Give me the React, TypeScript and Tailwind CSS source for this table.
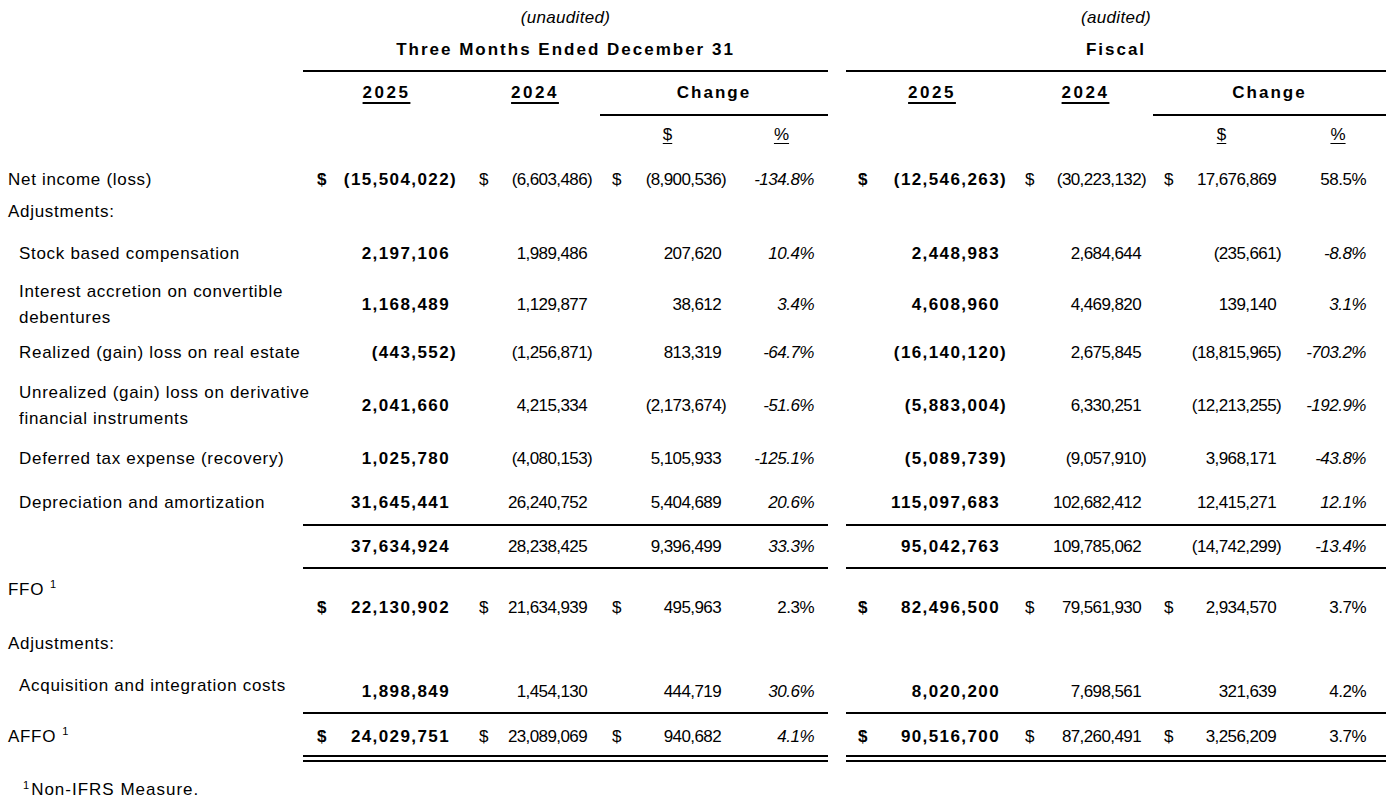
import React from "react";
import { clsx } from "clsx";

/** 11 tracks: label | Q3 2025, 2024, chg $, chg % | gap | FY 2025, 2024, chg $, chg % | edge */
const GRID =
  "grid grid-cols-[303px_167px_130px_135px_93px_18px_172px_135px_137px_96px_6px]";

type Col = { pad: string; slot: string };

const COLS: Col[] = [
  { pad: "pl-[14px] pr-[11px]", slot: "w-[9px]" },
  { pad: "pl-[9px] pr-[4px]", slot: "w-[9px]" },
  { pad: "pl-[12px] pr-[6px]", slot: "w-[8px]" },
  { pad: "pr-[14px]", slot: "" },
  { pad: "pl-[12px] pr-[9px]", slot: "w-[9px]" },
  { pad: "pl-[7px] pr-[4px]", slot: "w-[8px]" },
  { pad: "pl-[11px] pr-[7px]", slot: "w-[7px]" },
  { pad: "pr-[20px]", slot: "" },
];

type Line = "none" | "single" | "double";

type Side = {
  /** 2025, 2024, change $ */
  amounts: [string, string, string];
  pct: string;
  italic: boolean;
};

type DataRow = {
  label: React.ReactNode;
  indent?: boolean;
  dollar?: boolean;
  height: string;
  /** padding/alignment for label cell */
  labelBox: string;
  /** padding/alignment for number cells */
  valueBox: string;
  line?: Line;
  q3: Side;
  fy: Side;
};

function lineCls(line: Line) {
  if (line === "single") return "border-b-2 border-black";
  if (line === "double") return "border-b-[7px] border-double border-black";
  return "";
}

function Amount({
  v,
  col,
  bold,
  dollar,
  box,
  line,
}: {
  v: string;
  col: Col;
  bold: boolean;
  dollar: boolean;
  box: string;
  line: Line;
}) {
  const neg = v.endsWith(")");
  const body = neg ? v.slice(0, -1) : v;
  return (
    <div className={clsx("flex justify-between", col.pad, box, lineCls(line))}>
      <span className={clsx(bold && "font-bold")}>{dollar ? "$" : ""}</span>
      <span className="flex">
        <span
          className={clsx(
            "whitespace-nowrap",
            bold ? "font-bold tracking-[1.4px]" : "tracking-[-0.6px]",
          )}
        >
          {body}
        </span>
        <span className={clsx(col.slot, bold && "font-bold")}>
          {neg ? ")" : ""}
        </span>
      </span>
    </div>
  );
}

function Pct({
  v,
  italic,
  col,
  box,
  line,
}: {
  v: string;
  italic: boolean;
  col: Col;
  box: string;
  line: Line;
}) {
  return (
    <div className={clsx("flex justify-end", col.pad, box, lineCls(line))}>
      <span className={clsx("tracking-[-0.5px]", italic && "italic")}>{v}</span>
    </div>
  );
}

function SideCells({
  side,
  offset,
  row,
}: {
  side: Side;
  offset: number;
  row: DataRow;
}) {
  const line = row.line ?? "none";
  return (
    <>
      {side.amounts.map((a, i) => (
        <Amount
          key={i}
          v={a}
          col={COLS[offset + i]}
          bold={i === 0}
          dollar={!!row.dollar}
          box={row.valueBox}
          line={line}
        />
      ))}
      <Pct
        v={side.pct}
        italic={side.italic}
        col={COLS[offset + 3]}
        box={row.valueBox}
        line={line}
      />
    </>
  );
}

function Sup() {
  return <span className="relative -top-[7px] ml-[6px] text-[11px]">1</span>;
}

const ROWS: DataRow[] = [
  {
    label: "Net income (loss)",
    dollar: true,
    height: "h-[42px]",
    labelBox: "pt-[16px]",
    valueBox: "pt-[16px]",
    q3: { amounts: ["(15,504,022)", "(6,603,486)", "(8,900,536)"], pct: "-134.8%", italic: true },
    fy: { amounts: ["(12,546,263)", "(30,223,132)", "17,676,869"], pct: "58.5%", italic: false },
  },
  {
    label: "Adjustments:",
    height: "h-[36px]",
    labelBox: "pt-[6px]",
    valueBox: "",
    q3: { amounts: ["", "", ""], pct: "", italic: false },
    fy: { amounts: ["", "", ""], pct: "", italic: false },
  },
  {
    label: "Stock based compensation",
    indent: true,
    height: "h-[40px]",
    labelBox: "pt-[12px]",
    valueBox: "pt-[12px]",
    q3: { amounts: ["2,197,106", "1,989,486", "207,620"], pct: "10.4%", italic: true },
    fy: { amounts: ["2,448,983", "2,684,644", "(235,661)"], pct: "-8.8%", italic: true },
  },
  {
    label: (
      <>
        Interest accretion on convertible
        <br />
        debentures
      </>
    ),
    indent: true,
    height: "h-[62px]",
    labelBox: "pt-[4px] items-center leading-[26px]",
    valueBox: "pt-[4px] items-center",
    q3: { amounts: ["1,168,489", "1,129,877", "38,612"], pct: "3.4%", italic: true },
    fy: { amounts: ["4,608,960", "4,469,820", "139,140"], pct: "3.1%", italic: true },
  },
  {
    label: "Realized (gain) loss on real estate",
    indent: true,
    height: "h-[38px]",
    labelBox: "items-center",
    valueBox: "items-center",
    q3: { amounts: ["(443,552)", "(1,256,871)", "813,319"], pct: "-64.7%", italic: true },
    fy: { amounts: ["(16,140,120)", "2,675,845", "(18,815,965)"], pct: "-703.2%", italic: true },
  },
  {
    label: (
      <>
        Unrealized (gain) loss on derivative
        <br />
        financial instruments
      </>
    ),
    indent: true,
    height: "h-[68px]",
    labelBox: "items-center leading-[26px]",
    valueBox: "items-center",
    q3: { amounts: ["2,041,660", "4,215,334", "(2,173,674)"], pct: "-51.6%", italic: true },
    fy: { amounts: ["(5,883,004)", "6,330,251", "(12,213,255)"], pct: "-192.9%", italic: true },
  },
  {
    label: "Deferred tax expense (recovery)",
    indent: true,
    height: "h-[38px]",
    labelBox: "items-center",
    valueBox: "items-center",
    q3: { amounts: ["1,025,780", "(4,080,153)", "5,105,933"], pct: "-125.1%", italic: true },
    fy: { amounts: ["(5,089,739)", "(9,057,910)", "3,968,171"], pct: "-43.8%", italic: true },
  },
  {
    label: "Depreciation and amortization",
    indent: true,
    height: "h-[48px]",
    labelBox: "pt-[15px]",
    valueBox: "pt-[15px]",
    line: "single",
    q3: { amounts: ["31,645,441", "26,240,752", "5,404,689"], pct: "20.6%", italic: true },
    fy: { amounts: ["115,097,683", "102,682,412", "12,415,271"], pct: "12.1%", italic: true },
  },
  {
    label: "",
    height: "h-[43px]",
    labelBox: "",
    valueBox: "pt-[11px]",
    line: "single",
    q3: { amounts: ["37,634,924", "28,238,425", "9,396,499"], pct: "33.3%", italic: true },
    fy: { amounts: ["95,042,763", "109,785,062", "(14,742,299)"], pct: "-13.4%", italic: true },
  },
  {
    label: (
      <>
        FFO
        <Sup />
      </>
    ),
    dollar: true,
    height: "h-[59px]",
    labelBox: "pt-[11px]",
    valueBox: "pt-[29px]",
    q3: { amounts: ["22,130,902", "21,634,939", "495,963"], pct: "2.3%", italic: false },
    fy: { amounts: ["82,496,500", "79,561,930", "2,934,570"], pct: "3.7%", italic: false },
  },
  {
    label: "Adjustments:",
    height: "h-[32px]",
    labelBox: "pt-[6px]",
    valueBox: "",
    q3: { amounts: ["", "", ""], pct: "", italic: false },
    fy: { amounts: ["", "", ""], pct: "", italic: false },
  },
  {
    label: "Acquisition and integration costs",
    indent: true,
    height: "h-[54px]",
    labelBox: "pt-[16px]",
    valueBox: "pt-[22px]",
    line: "single",
    q3: { amounts: ["1,898,849", "1,454,130", "444,719"], pct: "30.6%", italic: true },
    fy: { amounts: ["8,020,200", "7,698,561", "321,639"], pct: "4.2%", italic: false },
  },
  {
    label: (
      <>
        AFFO
        <Sup />
      </>
    ),
    dollar: true,
    height: "h-[48px]",
    labelBox: "pt-[13px]",
    valueBox: "pt-[13px]",
    line: "double",
    q3: { amounts: ["24,029,751", "23,089,069", "940,682"], pct: "4.1%", italic: true },
    fy: { amounts: ["90,516,700", "87,260,491", "3,256,209"], pct: "3.7%", italic: false },
  },
];

function Row({ row }: { row: DataRow }) {
  return (
    <div className={clsx(GRID, row.height)}>
      <div
        className={clsx(
          "flex whitespace-nowrap tracking-[0.7px]",
          row.indent ? "pl-[19px]" : "pl-[8px]",
          row.labelBox,
        )}
      >
        <div>{row.label}</div>
      </div>
      <SideCells side={row.q3} offset={0} row={row} />
      <div />
      <SideCells side={row.fy} offset={4} row={row} />
      <div />
    </div>
  );
}

function YearHead({ y }: { y: string }) {
  return (
    <div className="pt-[11px] text-center">
      <span className="font-bold tracking-[2.5px] underline decoration-2 underline-offset-[4px]">
        {y}
      </span>
    </div>
  );
}

export default function App() {
  return (
    <div className="h-[807px] w-[1392px] overflow-hidden bg-white font-['Liberation_Sans',Arial,sans-serif] text-[17px] leading-[20px] text-black">
      {/* audit status */}
      <div className={clsx(GRID, "h-[36px]")}>
        <div />
        <div className="col-span-4 pt-[8px] text-center italic tracking-[0.3px]">
          (unaudited)
        </div>
        <div />
        <div className="col-span-4 pt-[8px] text-center italic tracking-[0.3px]">
          (audited)
        </div>
        <div />
      </div>

      {/* period titles */}
      <div className={clsx(GRID, "h-[36px]")}>
        <div />
        <div className="col-span-4 border-b-2 border-black pt-[4px] text-center font-bold tracking-[2px]">
          Three Months Ended December 31
        </div>
        <div />
        <div className="col-span-4 border-b-2 border-black pt-[4px] text-center font-bold tracking-[2px]">
          Fiscal
        </div>
        <div />
      </div>

      {/* years */}
      <div className={clsx(GRID, "h-[44px]")}>
        <div />
        <YearHead y="2025" />
        <YearHead y="2024" />
        <div className="col-span-2 border-b-2 border-black pt-[11px] text-center font-bold tracking-[2px]">
          Change
        </div>
        <div />
        <YearHead y="2025" />
        <YearHead y="2024" />
        <div className="col-span-2 border-b-2 border-black pt-[11px] text-center font-bold tracking-[2px]">
          Change
        </div>
        <div />
      </div>

      {/* $ / % */}
      <div className={clsx(GRID, "h-[38px]")}>
        <div />
        <div />
        <div />
        <div className="pt-[9px] text-center">
          <span className="underline underline-offset-[3px]">$</span>
        </div>
        <div className="pt-[9px] text-center">
          <span className="underline underline-offset-[3px]">%</span>
        </div>
        <div />
        <div />
        <div />
        <div className="pt-[9px] text-center">
          <span className="underline underline-offset-[3px]">$</span>
        </div>
        <div className="pt-[9px] text-center">
          <span className="underline underline-offset-[3px]">%</span>
        </div>
        <div />
      </div>

      {ROWS.map((r, i) => (
        <Row key={i} row={r} />
      ))}

      <div className="flex items-start pl-[23px] pt-[18px] tracking-[1px]">
        <span className="relative -top-[5px] mr-[1px] text-[11px]">1</span>
        <span>Non-IFRS Measure.</span>
      </div>
    </div>
  );
}
